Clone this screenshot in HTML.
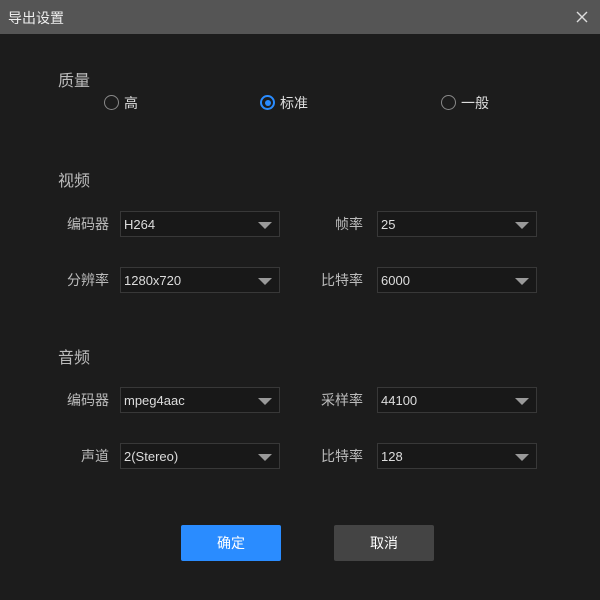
<!DOCTYPE html>
<html><head><meta charset="utf-8"><style>
*{margin:0;padding:0;box-sizing:border-box}
body{width:600px;height:600px;background:#1c1c1c;font-family:"Liberation Sans","Noto Sans CJK SC",sans-serif;color:#ddd;position:relative;overflow:hidden}
.t{position:absolute;left:0;top:0;width:600px;height:34px;background:#555;}
.t span{position:absolute;left:8px;top:8px;font-size:14px;color:#eee}
.x{position:absolute;left:576px;top:11px}
.a{position:absolute;white-space:nowrap}
.h{font-size:16px;color:#bbb}
.l{font-size:14px;color:#bbb;text-align:right;width:60px}
.s{position:absolute;width:160px;height:26px;background:#181818;border:1px solid #383838;font-size:13px;color:#ddd;padding:5px 0 0 3px}
.s:after{content:"";position:absolute;right:7px;top:10px;border-left:7px solid transparent;border-right:7px solid transparent;border-top:7px solid #999}
.r{position:absolute;width:15px;height:15px;border-radius:50%;border:1px solid #888}
.r.on{border:2px solid #2a8cff}
.r.on:after{content:"";position:absolute;left:2.5px;top:2.5px;width:6px;height:6px;border-radius:50%;background:#2a8cff}
.rt{font-size:14px;color:#ddd}
.b{position:absolute;top:525px;width:100px;height:36px;border-radius:2px;font-size:14px;color:#fff;text-align:center;line-height:36px}
</style></head><body>
<div class="t"><span>导出设置</span>
<svg class="x" width="12" height="12"><path d="M1 1L11 11M11 1L1 11" stroke="#ddd" stroke-width="1.4"/></svg></div>
<div class="a h" style="left:58px;top:67px">质量</div>
<div class="r" style="left:104px;top:95px"></div><div class="a rt" style="left:124px;top:93px">高</div>
<div class="r on" style="left:260px;top:95px"></div><div class="a rt" style="left:280px;top:93px">标准</div>
<div class="r" style="left:441px;top:95px"></div><div class="a rt" style="left:461px;top:93px">一般</div>

<div class="a h" style="left:58px;top:167px">视频</div>
<div class="a l" style="left:49px;top:214px">编码器</div><div class="s" style="left:120px;top:211px">H264</div>
<div class="a l" style="left:303px;top:214px">帧率</div><div class="s" style="left:377px;top:211px">25</div>
<div class="a l" style="left:49px;top:270px">分辨率</div><div class="s" style="left:120px;top:267px">1280x720</div>
<div class="a l" style="left:303px;top:270px">比特率</div><div class="s" style="left:377px;top:267px">6000</div>

<div class="a h" style="left:58px;top:344px">音频</div>
<div class="a l" style="left:49px;top:390px">编码器</div><div class="s" style="left:120px;top:387px">mpeg4aac</div>
<div class="a l" style="left:303px;top:390px">采样率</div><div class="s" style="left:377px;top:387px">44100</div>
<div class="a l" style="left:49px;top:446px">声道</div><div class="s" style="left:120px;top:443px">2(Stereo)</div>
<div class="a l" style="left:303px;top:446px">比特率</div><div class="s" style="left:377px;top:443px">128</div>

<div class="b" style="left:181px;background:#2a8cff">确定</div>
<div class="b" style="left:334px;background:#444">取消</div>
</body></html>
